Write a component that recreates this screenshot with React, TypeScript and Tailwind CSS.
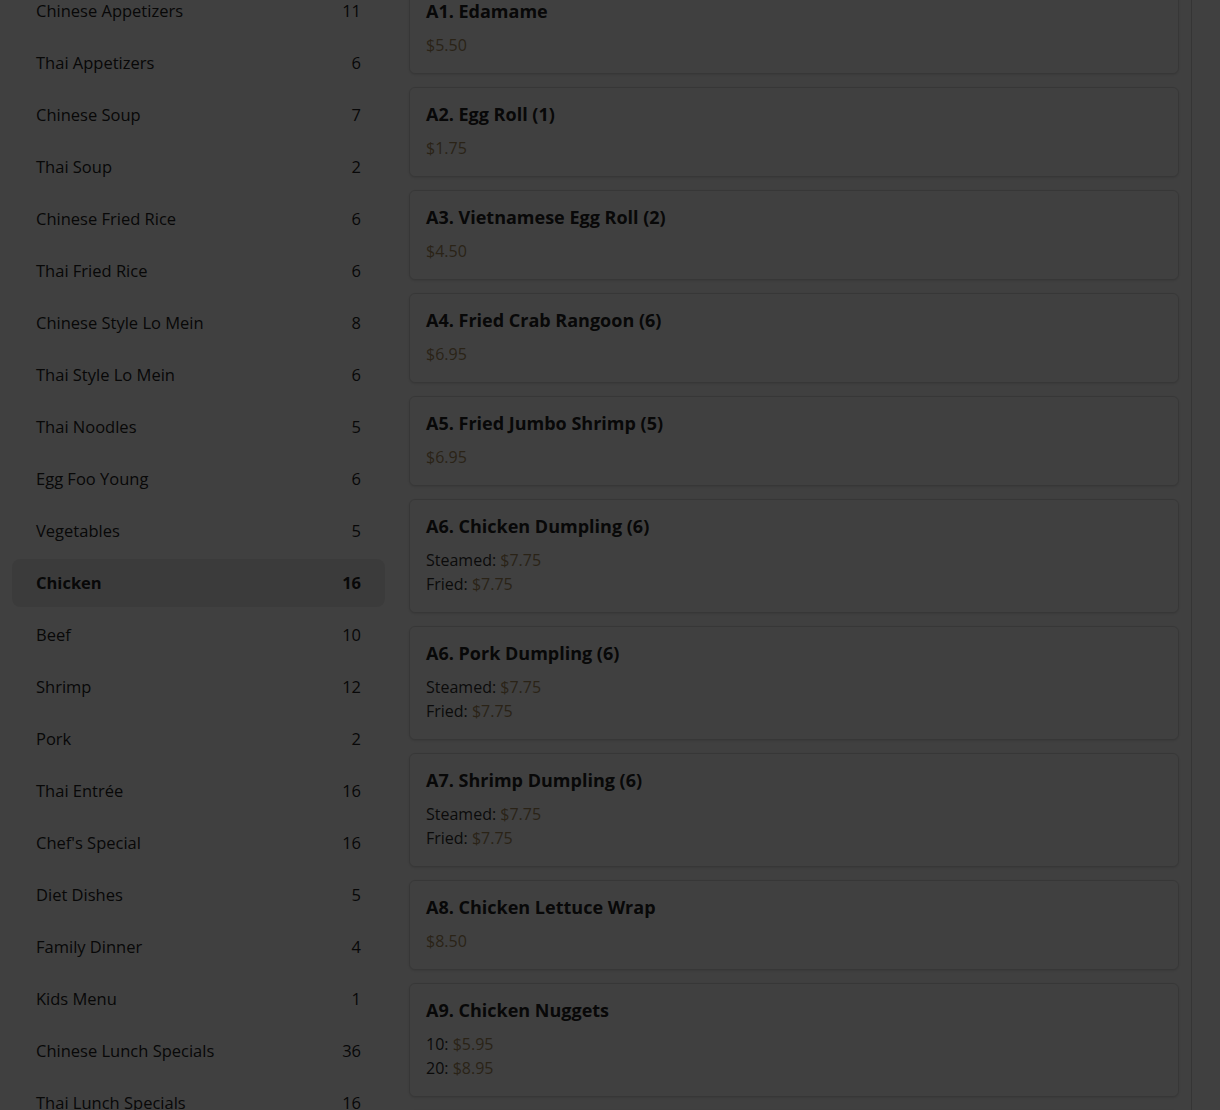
interface Category {
  name: string;
  count: number;
}

interface PriceOption {
  label?: string;
  price: string;
}

interface MenuItem {
  id: string;
  name: string;
  prices: PriceOption[];
}

const categories: Category[] = [
  { name: 'Chinese Appetizers', count: 11 },
  { name: 'Thai Appetizers', count: 6 },
  { name: 'Chinese Soup', count: 7 },
  { name: 'Thai Soup', count: 2 },
  { name: 'Chinese Fried Rice', count: 6 },
  { name: 'Thai Fried Rice', count: 6 },
  { name: 'Chinese Style Lo Mein', count: 8 },
  { name: 'Thai Style Lo Mein', count: 6 },
  { name: 'Thai Noodles', count: 5 },
  { name: 'Egg Foo Young', count: 6 },
  { name: 'Vegetables', count: 5 },
  { name: 'Chicken', count: 16 },
  { name: 'Beef', count: 10 },
  { name: 'Shrimp', count: 12 },
  { name: 'Pork', count: 2 },
  { name: 'Thai Entrée', count: 16 },
  { name: "Chef's Special", count: 16 },
  { name: 'Diet Dishes', count: 5 },
  { name: 'Family Dinner', count: 4 },
  { name: 'Kids Menu', count: 1 },
  { name: 'Chinese Lunch Specials', count: 36 },
  { name: 'Thai Lunch Specials', count: 16 },
];

const dumpling = [
  { label: 'Steamed', price: '$7.75' },
  { label: 'Fried', price: '$7.75' },
];

const items: MenuItem[] = [
  { id: 'a1', name: 'A1. Edamame', prices: [{ price: '$5.50' }] },
  { id: 'a2', name: 'A2. Egg Roll (1)', prices: [{ price: '$1.75' }] },
  { id: 'a3', name: 'A3. Vietnamese Egg Roll (2)', prices: [{ price: '$4.50' }] },
  { id: 'a4', name: 'A4. Fried Crab Rangoon (6)', prices: [{ price: '$6.95' }] },
  { id: 'a5', name: 'A5. Fried Jumbo Shrimp (5)', prices: [{ price: '$6.95' }] },
  { id: 'a6c', name: 'A6. Chicken Dumpling (6)', prices: dumpling },
  { id: 'a6p', name: 'A6. Pork Dumpling (6)', prices: dumpling },
  { id: 'a7', name: 'A7. Shrimp Dumpling (6)', prices: dumpling },
  { id: 'a8', name: 'A8. Chicken Lettuce Wrap', prices: [{ price: '$8.50' }] },
  {
    id: 'a9',
    name: 'A9. Chicken Nuggets',
    prices: [
      { label: '10', price: '$5.95' },
      { label: '20', price: '$8.95' },
    ],
  },
  { id: 'a10', name: 'A10. French Fries', prices: [{ price: '$3.95' }] },
];

const selected = 'Chicken';

function Sidebar() {
  return (
    <nav className="w-[397px] shrink-0 px-3 pt-[3px] flex flex-col gap-1">
      {categories.map((cat) => {
        const active = cat.name === selected;
        return (
          <div
            key={cat.name}
            className={`h-12 px-6 flex items-center justify-between rounded-lg text-[16.5px] text-[#222] ${
              active ? 'bg-[#ececec] font-bold' : ''
            }`}
          >
            <span>{cat.name}</span>
            <span>{cat.count}</span>
          </div>
        );
      })}
    </nav>
  );
}

function ItemCard({ item }: { item: MenuItem }) {
  return (
    <div className="rounded-md border border-[#dcdcdc] bg-white p-4 shadow-sm">
      <h3 className="text-lg leading-5 font-bold text-[#222]">{item.name}</h3>
      <div className="mt-3 text-base leading-6">
        {item.prices.map((p, i) => (
          <div key={i} className="text-[#2e2e2e]">
            {p.label && <span>{p.label}: </span>}
            <span className="text-[#a88c5e]">{p.price}</span>
          </div>
        ))}
      </div>
    </div>
  );
}

export default function App() {
  return (
    <div
      className="relative h-[1110px] overflow-hidden bg-white"
      style={{ fontFamily: '"Open Sans", "Liberation Sans", sans-serif' }}
    >
      <div className="-mt-4 flex">
        <Sidebar />
        <main className="w-[795px] shrink-0 border-r border-[#d4d4d4] px-3 flex flex-col gap-[13px]">
          {items.map((item) => (
            <ItemCard key={item.id} item={item} />
          ))}
        </main>
      </div>
      <div className="fixed inset-0 bg-black/75" />
    </div>
  );
}
